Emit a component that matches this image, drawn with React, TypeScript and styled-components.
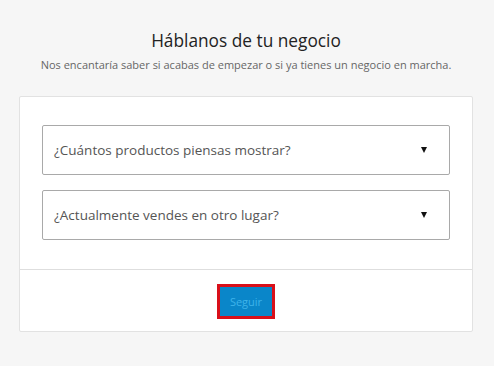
import React from 'react'
import styled, { createGlobalStyle } from 'styled-components'

const GlobalStyle = createGlobalStyle`
  html, body {
    margin: 0;
    padding: 0;
    background: #f6f6f6;
    font-family: "Open Sans", "Noto Sans", sans-serif;
  }
`

const questions = [
  '¿Cuántos productos piensas mostrar?',
  '¿Actualmente vendes en otro lugar?',
]

export default function App() {
  return (
    <>
      <GlobalStyle />
      <Page>
        <Header>
          <Title>Háblanos de tu negocio</Title>
          <Subtitle>Nos encantaría saber si acabas de empezar o si ya tienes un negocio en marcha.</Subtitle>
        </Header>
        <Card>
          <CardBody>
            {questions.map((q) => (
              <Select key={q}>
                <SelectLabel>{q}</SelectLabel>
                <Caret />
              </Select>
            ))}
          </CardBody>
          <CardFooter>
            <Button>Seguir</Button>
          </CardFooter>
        </Card>
      </Page>
    </>
  )
}

const Page = styled.div`
  width: 494px;
  height: 366px;
  box-sizing: border-box;
  padding: 29px 21px 0 19px;
  display: flex;
  flex-direction: column;
`

const Header = styled.div`
  display: flex;
  flex-direction: column;
  align-items: center;
  margin-bottom: 23px;
`

const Title = styled.h1`
  margin: 0;
  font-size: 17.3px;
  font-weight: 400;
  color: #222;
  line-height: 24px;
`

const Subtitle = styled.p`
  margin: 4px 0 0;
  font-size: 11px;
  color: #666;
  line-height: 16px;
`

const Card = styled.div`
  background: #fff;
  border: 1px solid #e2e2e2;
  border-radius: 2px;
  display: flex;
  flex-direction: column;
`

const CardBody = styled.div`
  padding: 28px 22px 29px 22px;
  display: flex;
  flex-direction: column;
  gap: 15px;
  border-bottom: 1px solid #dedede;
`

const Select = styled.div`
  height: 50px;
  box-sizing: border-box;
  border: 1px solid #a9a9a9;
  border-radius: 2px;
  display: flex;
  align-items: center;
  padding: 0 22px 0 11px;
`

const SelectLabel = styled.span`
  flex: 1;
  font-size: 13.5px;
  color: #555;
`

const Caret = styled.span`
  width: 0;
  height: 0;
  border-left: 3.5px solid transparent;
  border-right: 3.5px solid transparent;
  border-top: 6px solid #111;
`

const CardFooter = styled.div`
  display: flex;
  justify-content: center;
  padding: 14px 0 12px;
`

const Button = styled.button`
  width: 58px;
  height: 35px;
  box-sizing: border-box;
  border: 3px solid #d9101a;
  background: #0a86c9;
  color: #3eb3ea;
  font-family: inherit;
  font-size: 11px;
  padding: 0;
`
